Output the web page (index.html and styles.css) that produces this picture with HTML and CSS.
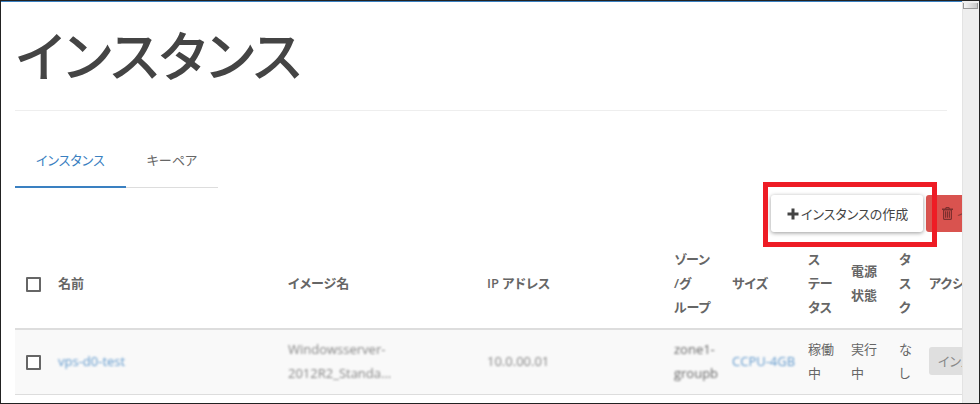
FILE: index.html
```html
<!DOCTYPE html>
<html lang="ja">
<head>
  <meta charset="UTF-8">
  <meta name="viewport" content="width=device-width, initial-scale=1.0">
  <title>インスタンス</title>
  <link rel="stylesheet" href="styles.css">
</head>
<body>
  <div class="window">
    <main class="content">
      <h1>インスタンス</h1>

      <nav class="tabs">
        <a class="tab active" href="#instances">インスタンス</a>
        <a class="tab" href="#keypairs">キーペア</a>
      </nav>

      <div class="actions">
        <div class="highlight">
          <button class="btn" type="button">
            <svg class="icon-plus" viewBox="0 0 12 12" aria-hidden="true"><path d="M4.5 0.5h3v4h4v3h-4v4h-3v-4h-4v-3h4z"/></svg>インスタンスの作成
          </button>
        </div>
        <button class="btn btn-danger" type="button" disabled>
          <svg class="icon-trash" viewBox="0 0 11 13" aria-hidden="true"><path fill-rule="evenodd" d="M4 0h3l1 1.5h3v1.5h-1V12l-1 1H2l-1-1V3H0V1.5h3zM4.2 1.5h2.6L6.4 1H4.6zM2.2 3.5v8.3h6.6V3.5zM3 4.2h1.2v6.6H3zM4.9 4.2h1.2v6.6H4.9zM6.8 4.2h1.2v6.6H6.8z"/></svg>
          インスタンスの削除
        </button>
      </div>

      <table id="instances">
        <colgroup>
          <col class="col-check">
          <col class="col-name">
          <col class="col-image">
          <col class="col-ip">
          <col class="col-zone">
          <col class="col-size">
          <col class="col-status">
          <col class="col-power">
          <col class="col-task">
          <col class="col-action">
        </colgroup>
        <thead>
          <tr>
            <th><input type="checkbox" aria-label="すべて選択"></th>
            <th>名前</th>
            <th>イメージ名</th>
            <th>IP アドレス</th>
            <th>ゾーン<br>/グ<br>ループ</th>
            <th>サイズ</th>
            <th>ス<br>テー<br>タス</th>
            <th>電源<br>状態</th>
            <th>タ<br>ス<br>ク</th>
            <th>アクション</th>
          </tr>
        </thead>
        <tbody>
          <tr>
            <td><input type="checkbox" aria-label="インスタンスを選択"></td>
            <td><a class="masked" href="#detail">vps-d0-test</a></td>
            <td><span class="masked">Windowsserver-<br>2012R2_Standa...</span></td>
            <td><span class="masked">10.0.00.01</span></td>
            <td><span class="masked light">zone1-<br>groupb</span></td>
            <td><a class="masked" href="#size">CCPU-4GB</a></td>
            <td>稼働<br>中</td>
            <td>実行<br>中</td>
            <td>な<br>し</td>
            <td><button class="row-btn" type="button" disabled>インスタンス</button></td>
          </tr>
        </tbody>
      </table>
    </main>
    <div class="scrollbar"><div class="thumb"></div></div>
  </div>
</body>
</html>
```
FILE: styles.css
```css
* {
  box-sizing: border-box;
}

body {
  margin: 0;
  font-family: "Open Sans", "Noto Sans CJK JP", sans-serif;
  font-size: 13px;
  font-feature-settings: "palt";
  line-height: 24px;
  color: #666;
  background: #fff;
}

.window {
  display: flex;
  min-height: 100vh;
  border: 1px solid #222;
}

.content {
  flex: 1;
  min-width: 0;
  overflow: hidden;
  padding: 0 15px 8px 14px;
  border-top: 1px solid #3a80c1;
}

h1 {
  margin: 0;
  padding: 18px 0 18px 1px;
  border-bottom: 1px solid #eee;
  font-size: 54px;
  font-weight: 500;
  line-height: 72px;
  color: #444;
}

/* tabs */
.tabs {
  display: flex;
  margin-top: 24px;
}

.tab {
  padding: 13px 21px 14px;
  border-bottom: 1px solid #ddd;
  color: #666;
  text-decoration: none;
}

.tab.active {
  border-bottom: 2px solid #3a80c1;
  color: #3a80c1;
}

/* buttons */
.actions {
  display: flex;
  align-items: flex-start;
  justify-content: flex-end;
  height: 52px;
  padding-top: 7px;
  margin-right: -131px;
  white-space: nowrap;
}

.highlight {
  position: relative;
}

.highlight::after {
  content: "";
  position: absolute;
  inset: -13px -14px -15px -8px;
  border: 5px solid #ee1c25;
  pointer-events: none;
}

.btn {
  display: flex;
  align-items: center;
  width: 152px;
  height: 37px;
  padding: 0 16px;
  border: 0;
  border-radius: 3px;
  background: #fff;
  box-shadow: 0 1px 4px rgba(0, 0, 0, 0.4);
  color: #444;
  font: inherit;
  font-feature-settings: inherit;
  white-space: nowrap;
}

.btn-danger {
  margin-left: 3px;
  gap: 4px;
  background: #d9534f;
  box-shadow: none;
  color: #8c3a38;
}

.icon-plus {
  width: 12px;
  height: 12px;
  margin-right: 2px;
  flex: none;
  fill: #444;
}

.icon-trash {
  width: 11px;
  height: 13px;
  flex: none;
  fill: #7d2f2e;
}

/* table */
table {
  width: calc(100% + 79px);
  table-layout: fixed;
  border-collapse: separate;
  border-spacing: 0;
}

.col-check { width: 35px; }
.col-image { width: 199px; }
.col-ip { width: 187px; }
.col-zone { width: 58px; }
.col-size { width: 76px; }
.col-status { width: 43px; }
.col-power { width: 48px; }
.col-task { width: 30px; }
.col-action { width: 105px; }

th,
td {
  padding: 7px 0 9px 8px;
  text-align: left;
  vertical-align: middle;
  white-space: nowrap;
}

th {
  border-bottom: 2px solid #ddd;
  font-weight: 600;
}

td {
  border-bottom: 1px solid #ddd;
  background: #f9f9f9;
}

td a {
  color: #3a80c1;
  text-decoration: none;
}

input[type="checkbox"] {
  appearance: none;
  display: block;
  width: 15px;
  height: 15px;
  margin: 3px 0 0 3px;
  border: 2px solid #666;
  border-radius: 1px;
  background: #fff;
}

.masked {
  display: inline-block;
  filter: blur(1px);
  opacity: 0.8;
}

.masked.light {
  opacity: 1;
}

.row-btn {
  display: block;
  height: 28px;
  padding: 0 9px;
  border: 0;
  border-radius: 3px;
  background: #dfdfdf;
  color: #888;
  font: inherit;
  font-feature-settings: inherit;
}

/* scrollbar */
.scrollbar {
  width: 17px;
  padding: 2px 1px 0 0;
  border-left: 1px solid #e3e3e3;
  background: #eee;
}

.thumb {
  height: 6px;
  border: 1px solid #999;
  border-top: 0;
  background: linear-gradient(to right, #f5f5f5, #c8c8c8);
}
```
